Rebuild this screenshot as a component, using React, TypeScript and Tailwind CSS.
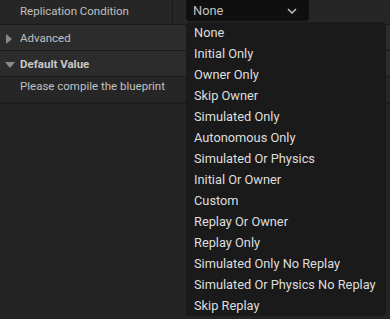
import React from "react";

const items = [
  "None",
  "Initial Only",
  "Owner Only",
  "Skip Owner",
  "Simulated Only",
  "Autonomous Only",
  "Simulated Or Physics",
  "Initial Or Owner",
  "Custom",
  "Replay Or Owner",
  "Replay Only",
  "Simulated Only No Replay",
  "Simulated Or Physics No Replay",
  "Skip Replay",
];

export default function App() {
  return (
    <div
      className="relative w-[390px] h-[319px] overflow-hidden bg-[#242424] text-[11.5px]"
      style={{ fontFamily: "Roboto, 'Noto Sans', sans-serif" }}
    >
      {/* Row 1 */}
      <div className="flex h-[25px] bg-[#262626] border-b border-[#1a1a1a]">
        <div className="w-[173px] flex items-center pl-[20px] text-[#c0c0c0] border-r border-[#1a1a1a]">
          Replication Condition
        </div>
        <div className="flex-1 flex items-start pl-[13px]">
          <div className="w-[123px] h-[21px] rounded-b-[4px] bg-[#0f0f0f] flex items-center justify-between pl-[7px] pr-[12px] text-[12.8px] text-[#c0c0c0]">
            <span>None</span>
            <svg width="10" height="6" viewBox="0 0 10 6" fill="none">
              <path d="M1 1l4 4 4-4" stroke="#c0c0c0" strokeWidth="1.5" />
            </svg>
          </div>
        </div>
      </div>
      {/* Advanced */}
      <div className="flex items-center h-[26px] pt-[2px] bg-[#2c2c2c] border-b border-[#1a1a1a] text-[#c0c0c0]">
        <svg width="16" height="10" viewBox="0 0 16 10" className="ml-[2px] mr-[2px]">
          <path d="M4 0l6 5-6 5z" fill="#8a8a8a" />
        </svg>
        <span>Advanced</span>
      </div>
      {/* Default Value */}
      <div className="flex items-center h-[26px] pt-[2px] bg-[#2c2c2c] border-b border-[#1a1a1a] text-[#c8c8c8] font-bold">
        <svg width="16" height="10" viewBox="0 0 16 10" className="ml-[2px] mr-[2px]">
          <path d="M3 2h10l-5 6z" fill="#8a8a8a" />
        </svg>
        <span>Default Value</span>
      </div>
      <div className="flex items-start h-[27px] bg-[#262626] border-b-2 border-[#1c1c1c] pl-[20px] pt-[1px] text-[#c0c0c0]">
        Please compile the blueprint
      </div>

      {/* Dropdown menu */}
      <div className="absolute left-[186px] top-[22px] w-[200px] h-[294px] bg-[#1a1a1a] rounded-[4px] flex flex-col text-[12.8px]">
        {items.map((it) => (
          <div key={it} className="h-[21px] flex items-center pl-[8px] pt-[1px] text-[#dedede]">
            {it}
          </div>
        ))}
      </div>
    </div>
  );
}
